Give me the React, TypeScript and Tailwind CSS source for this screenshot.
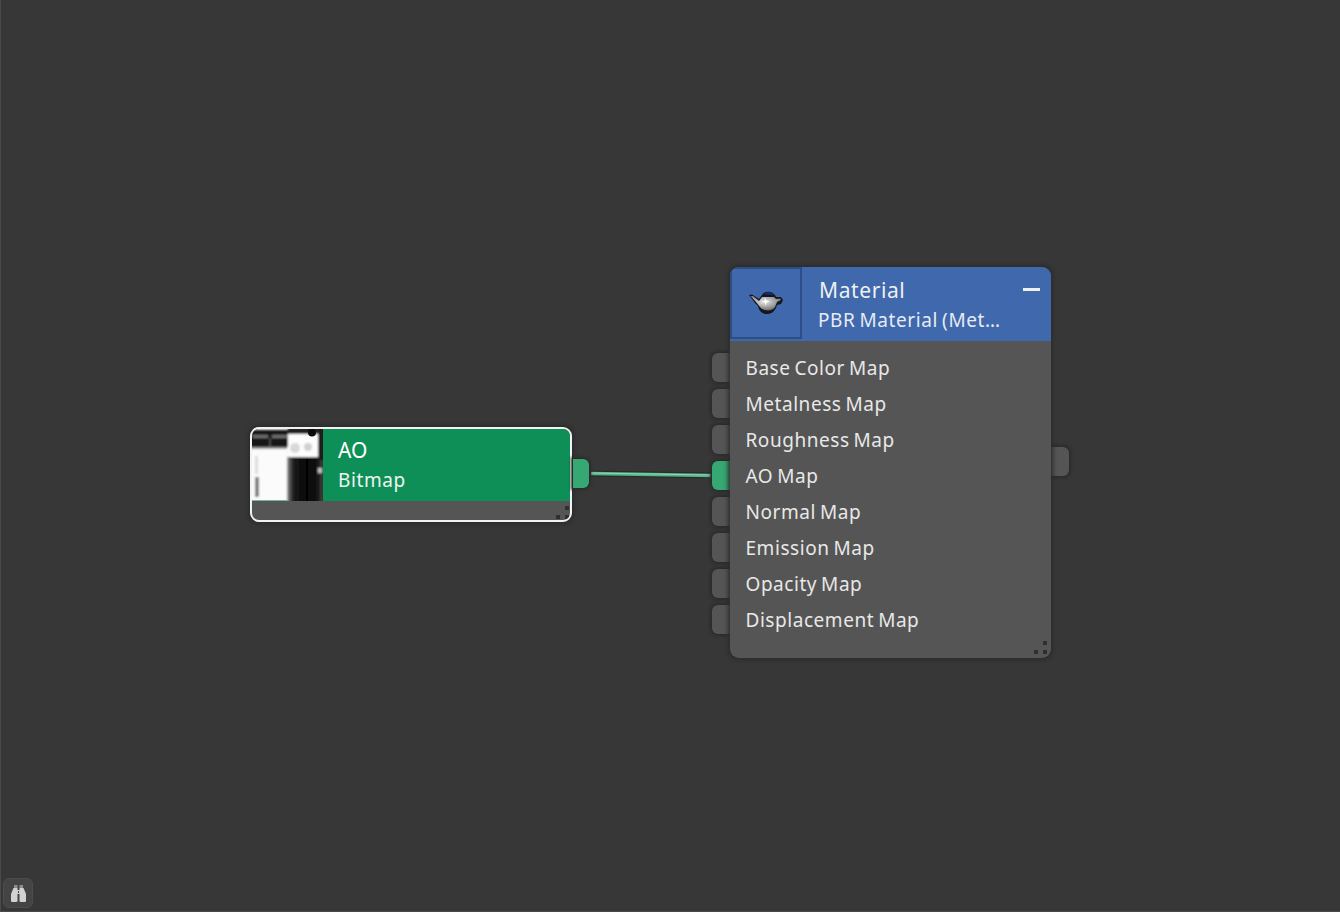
const inputs = [
  { label: "Base Color Map" },
  { label: "Metalness Map" },
  { label: "Roughness Map" },
  { label: "AO Map", active: true },
  { label: "Normal Map" },
  { label: "Emission Map" },
  { label: "Opacity Map" },
  { label: "Displacement Map" },
]

function ResizeGrip({ className }: { className: string }) {
  return (
    <svg width="14" height="14" viewBox="0 0 14 14" className={className}>
      <rect x="9" y="0" width="4" height="4" fill="#2f2f2f" />
      <rect x="0" y="9" width="4" height="4" fill="#2f2f2f" />
      <rect x="9" y="9" width="4" height="4" fill="#2f2f2f" />
    </svg>
  )
}

function BitmapThumb() {
  return (
    <svg width="71" height="72" viewBox="0 0 71 72" className="shrink-0 block">
      <defs>
        <filter id="thumbBlur" x="-5%" y="-5%" width="110%" height="110%"><feGaussianBlur stdDeviation="1" /></filter>
        <linearGradient id="thumbDark" x1="0" x2="1" y1="0" y2="0">
          <stop offset="0" stopColor="#8a8a8a" />
          <stop offset="0.16" stopColor="#1c1c1c" />
          <stop offset="0.5" stopColor="#050505" />
          <stop offset="0.8" stopColor="#141414" />
          <stop offset="0.88" stopColor="#3c3c3c" />
          <stop offset="1" stopColor="#1e1e1e" />
        </linearGradient>
      </defs>
      <rect width="71" height="72" fill="#f4f4f4" />
      <g filter="url(#thumbBlur)">
        <rect x="-3" y="1" width="39" height="17" fill="#161616" />
        <rect x="1" y="6" width="15" height="3" fill="#6e6e6e" />
        <rect x="20" y="6" width="16" height="3" fill="#6e6e6e" />
        <rect x="17" y="9" width="2" height="9" fill="#444" />
        <rect x="36" y="-3" width="30" height="8" fill="#222" />
        <rect x="36" y="5" width="30" height="23" fill="#fdfdfd" />
        <circle cx="43" cy="19" r="5" fill="#d8d8d8" />
        <circle cx="56" cy="18" r="4" fill="#cfcfcf" />
        <rect x="35" y="28" width="39" height="47" fill="url(#thumbDark)" />
        <rect x="66" y="-3" width="8" height="34" fill="#1e1e1e" />
        <rect x="-3" y="18" width="38" height="3" fill="#8c8c8c" />
        <rect x="-3" y="20" width="38" height="55" fill="#fbfbfb" />
        <rect x="3" y="48" width="4" height="20" fill="#7c7c7c" />
        <rect x="3" y="27" width="3" height="18" fill="#dcdcdc" />
        <rect x="66" y="39" width="4" height="5" fill="#c0c0c0" />
      </g>
      <circle cx="60" cy="3.5" r="4" fill="#0b0b0b" />
      <rect x="0" y="71" width="36" height="1" fill="#6fbb96" />
    </svg>
  )
}

function TeapotIcon() {
  return (
    <svg width="36" height="28" viewBox="0 0 36 28" className="block">
      <defs>
        <radialGradient id="potShine" cx="0.45" cy="0.4" r="0.65">
          <stop offset="0" stopColor="#e8e8e8" />
          <stop offset="0.45" stopColor="#b0b0b0" />
          <stop offset="1" stopColor="#666666" />
        </radialGradient>
      </defs>
      <path d="M1 6 L4 5.5 L11 10 L14 6 C16 1.5 24 1.5 27 6 L28 8 L33 8 L35 11 L33 15 L29 16 C27 23 23 25 19 25 C14 25 11 22 10 17 L7 14 Z" fill="#15171c" />
      <path d="M16 5.5 C18 2.5 23 2.5 26 6.5 L22 5.5 Z" fill="#1a2f80" />
      <path d="M2.5 7 L5 7 L11 12 L14 8 L26 8 L28 10 L32 9.5 L33 11 L29 13 L27 18 C25 22 16 23 12 18 L8 13 Z" fill="url(#potShine)" />
      <path d="M16.5 8 L17 11.5 L14 12.5 L17 13.5 L17.5 17 L18.5 13.5 L22 12.5 L18.5 11.5 Z" fill="#fff" />
    </svg>
  )
}

function Binoculars() {
  return (
    <svg width="17" height="17" viewBox="0 0 17 17" className="block">
      <path d="M4 0 H7.5 V3 H4 Z M9.5 0 H13 V3 H9.5 Z" fill="#8e8e8e" />
      <path d="M3.5 3 H7.5 V16 Q7.5 17 6 17 H2 Q1 17 1 16 V9 Z M9.5 3 H13.5 L16 9 V16 Q16 17 15 17 H11 Q9.5 17 9.5 16 Z" fill="#d2d2d2" />
      <rect x="7" y="5" width="3" height="4" fill="#d2d2d2" />
      <rect x="8" y="6" width="1" height="2" fill="#3e3e3e" />
    </svg>
  )
}

export default function App() {
  return (
    <div
      className="relative w-[1340px] h-[912px] overflow-hidden bg-[#373737] border-l border-b border-[#4a4a4a]"
      style={{ fontFamily: '"Noto Sans", "Open Sans", sans-serif' }}
    >
      {/* wire between AO output and material input */}
      <svg width="1340" height="912" className="absolute left-[-1px] top-0">
        <path d="M591 473.5 L711 475.5" stroke="#2a2a2a" strokeWidth="6" fill="none" />
        <path d="M591 473.5 L711 475.5" stroke="#52b488" strokeWidth="3.4" fill="none" />
        <path d="M591 473 L711 475" stroke="#92d4b5" strokeWidth="1.2" fill="none" />
      </svg>

      {/* AO bitmap node */}
      <div className="absolute left-[249px] top-[427px] w-[322px] h-[95px] rounded-[9px] border-2 border-[#f2f2f2] bg-[#555555] shadow-[0_0_4px_2px_#2c2c2c] overflow-hidden">
        <div className="flex h-[72px] bg-[#0e8f57]">
          <BitmapThumb />
          <div className="flex flex-col pl-[15px] text-white">
            <span className="text-[21px] leading-[28px] mt-[7px]">AO</span>
            <span className="text-[19px] leading-[26px] mt-[3px] tracking-[0.6px] text-[#eef5f1]">Bitmap</span>
          </div>
        </div>
        <ResizeGrip className="absolute right-0 bottom-0" />
      </div>
      <div className="absolute left-[572px] top-[459px] w-[16px] h-[29px] rounded-r-[6px] bg-[#36a873] shadow-[0_0_3px_2px_#2c2c2c]" />

      {/* input sockets of the material node */}
      <div className="absolute left-[711px] top-[353px] flex flex-col gap-[7px]">
        {inputs.map((input) => (
          <div
            key={input.label}
            className={
              input.active
                ? "w-[20px] h-[29px] rounded-l-[6px] bg-[#36a873] shadow-[0_0_3px_2px_#2c2c2c]"
                : "w-[20px] h-[29px] rounded-l-[6px] bg-[#555555] shadow-[0_0_3px_2px_#2c2c2c]"
            }
          />
        ))}
      </div>
      <div className="absolute left-[1050px] top-[447px] w-[18px] h-[29px] rounded-r-[6px] bg-[#555555] shadow-[0_0_3px_2px_#2c2c2c]" />

      {/* material node */}
      <div className="absolute left-[729px] top-[267px] w-[321px] h-[391px] rounded-[9px] bg-[#555555] shadow-[0_0_4px_2px_#2c2c2c] overflow-hidden">
        <div className="flex h-[74px] bg-[#3f68ad]">
          <div className="flex items-center justify-center w-[72px] h-[72px] border-2 border-[#2d4d85] shrink-0">
            <TeapotIcon />
          </div>
          <div className="flex flex-col pl-[17px] min-w-0 text-[#f0f0f0]">
            <span className="text-[21px] leading-[28px] mt-[9px] tracking-[0.6px]">Material</span>
            <span className="text-[19px] leading-[26px] mt-[3px] -ml-px tracking-[0.6px] [word-spacing:-1.5px] text-[#e6ebf4]">PBR Material (Met…</span>
          </div>
          <div className="w-[17px] h-[3px] bg-[#f0f0f0] ml-auto mr-[11px] mt-[21px]" />
        </div>
        <div className="flex flex-col pl-[15.5px] pt-[9px]">
          {inputs.map((input) => (
            <div key={input.label} className="h-[36px] leading-[36px] text-[19px] tracking-[0.55px] [word-spacing:-1.5px] text-[#e8e8e8]">
              {input.label}
            </div>
          ))}
        </div>
        <ResizeGrip className="absolute right-[3px] bottom-[3px]" />
      </div>

      {/* search button, bottom left */}
      <div className="absolute left-[2px] top-[878px] w-[30px] h-[30px] rounded-[6px] bg-[#444444] border border-[#4c4c4c] flex items-center justify-center">
        <Binoculars />
      </div>
    </div>
  )
}
